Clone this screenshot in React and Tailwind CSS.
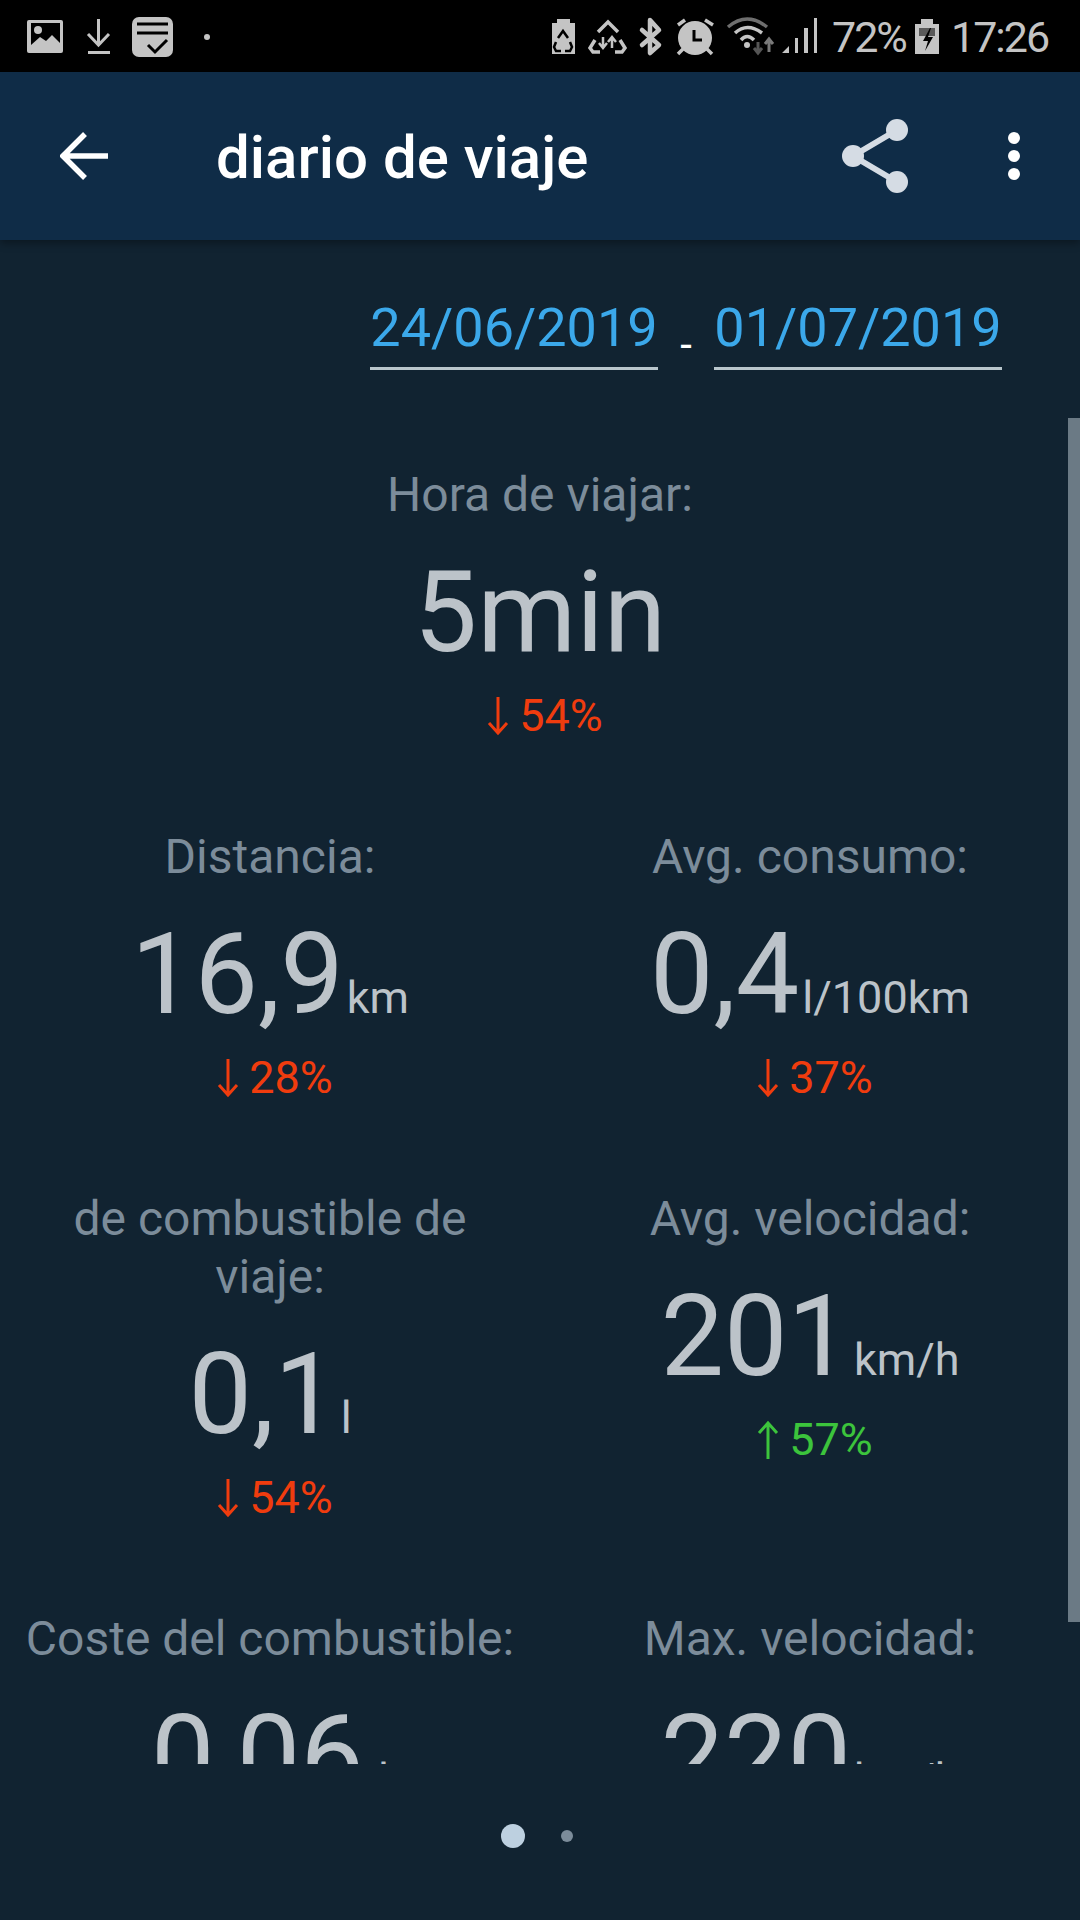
import React from "react";

function Arrow({ up, color }) {
  return (
    <svg width="22" height="40" viewBox="0 0 22 40" fill="none" stroke={color} strokeWidth="3">
      {up ? (
        <path d="M11 39V3M2 13l9-10 9 10" />
      ) : (
        <path d="M11 1v36M2 27l9 10 9-10" />
      )}
    </svg>
  );
}

function Delta({ value, up }) {
  const color = up ? "#3cc43c" : "#f03c0e";
  return (
    <div className={`flex items-center justify-center gap-[10px] h-[56px] mt-[9px] ml-[10px] text-[45px] ${up ? "text-[#3cc43c]" : "text-[#f03c0e]"}`}>
      <Arrow up={up} color={color} />
      <span>{value}</span>
    </div>
  );
}

function Stat({ label, value, unit, delta, up }) {
  return (
    <div className="flex flex-col items-center text-center">
      <div className="text-[48px] leading-[58px] text-[#7c8c9a] whitespace-pre-line">{label}</div>
      <div className="flex items-baseline justify-center h-[132px] mt-[23px] text-[#bcc3c9]">
        <span className="text-[113px] leading-[132px]">{value}</span>
        {unit && <span className="text-[45px] ml-[3px]">{unit}</span>}
      </div>
      <Delta value={delta} up={up} />
    </div>
  );
}

function StatusBar() {
  return (
    <div className="h-[72px] bg-black flex items-center text-[#c4c4c4] shrink-0">
      <svg width="1080" height="72" viewBox="0 0 1080 72" className="absolute left-0 top-0" fill="#c4c4c4">
        {/* gallery */}
        <path d="M27 22a2 2 0 0 1 2-2h32a2 2 0 0 1 2 2v29a2 2 0 0 1-2 2H29a2 2 0 0 1-2-2z" />
        <path d="M31 45l9-8 6 4 6-6 8 8v-20H31z" fill="#000" />
        <circle cx="38" cy="30" r="4" fill="#c4c4c4" />
        {/* download */}
        <path d="M98.500 19v26M88 34l10.500 11L109 34" fill="none" stroke="#c4c4c4" strokeWidth="3" />
        <rect x="88" y="51" width="22" height="3" />
        {/* check note */}
        <rect x="132" y="17" width="41" height="40" rx="7" />
        <path d="M137 24h31M137 33h31" stroke="#000" strokeWidth="3" />
        <path d="M148 45l7 7 12-12" fill="none" stroke="#000" strokeWidth="3" />
        <circle cx="207" cy="37" r="3" />
        {/* battery recycle */}
        <path d="M552 23h5v-4h13v4h5v31h-23z" />
        <path d="M558 38l5-7 5 7M556 42l-2 5 2 4h5M570 42l2 5-2 4h-5" fill="none" stroke="#000" strokeWidth="2.500" />
        {/* recycle triangle */}
        <path d="M598 32l10-10 10 10M595 40l-5 8 3 4h7M620 40l5 8-3 4h-7" fill="none" stroke="#c4c4c4" strokeWidth="3.500" />
        <path d="M603 37v10M599 43l4 5 4-5M612 48V37M608 42l4-5 4 5" fill="none" stroke="#c4c4c4" strokeWidth="2.500" />
        {/* bluetooth */}
        <path d="M642 30l17 15-9 8V20l9 10-17 15" fill="none" stroke="#c4c4c4" strokeWidth="4.500" strokeLinecap="round" strokeLinejoin="round" />
        {/* alarm */}
        <circle cx="695" cy="38" r="17" />
        <path d="M694 30v10h8" fill="none" stroke="#000" strokeWidth="3" />
        <path d="M678 25l7-5M713 25l-8-5M678 54l5-5M712 54l-5-5" fill="none" stroke="#c4c4c4" strokeWidth="3.500" />
        {/* wifi */}
        <path d="M728 27q19-16 39 0" fill="none" stroke="#6e6e6e" strokeWidth="3.500" />
        <path d="M735 33q12-11 27 0M741 40q6-7 13 0" fill="none" stroke="#c4c4c4" strokeWidth="3.500" />
        <circle cx="747" cy="45" r="3" />
        <path d="M758 42v11M754 48l4 5 4-5" fill="none" stroke="#555" strokeWidth="3" />
        <path d="M769 52V39M765 44l4-5 4 5" fill="none" stroke="#7a7a7a" strokeWidth="3" />
        {/* signal */}
        <path d="M782 53l7-7v7zM795 38h3v15h-3zM804 28h4v25h-4zM814 18h3v35h-3z" />
        {/* charging battery */}
        <path d="M915 24h6v-5h12v5h6v30h-24z" />
        <path d="M919 28h16v8h-16z" fill="#5a5a5a" />
        <path d="M930 28l-7 13h5l-3 10 8-14h-5l3-9z" fill="#000" />
      </svg>
      <span className="absolute left-[832px] top-[15px] text-[43px] leading-[44px] tracking-[-2px]">72%</span>
      <span className="absolute left-[951px] top-[15px] text-[43px] leading-[44px] tracking-[-2px]">17:26</span>
    </div>
  );
}

export default function App() {
  return (
    <div className="relative w-[1080px] h-[1920px] flex flex-col bg-[#112331] overflow-hidden font-['Roboto',sans-serif]">
      <StatusBar />

      {/* Toolbar */}
      <div className="relative h-[168px] shrink-0 bg-[#0f2c47] flex items-center shadow-[0_3px_8px_rgba(0,0,0,0.35)]">
        <svg width="48" height="48" viewBox="0 0 48 48" fill="none" stroke="#fff" strokeWidth="5.500" className="ml-[60px]">
          <path d="M48 24H4M25 2L3 24l22 22" />
        </svg>
        <span className="ml-[108px] mt-[3px] text-[60px] font-medium text-white">diario de viaje</span>
        <svg width="70" height="76" viewBox="0 0 70 76" className="ml-auto mr-[100px]" fill="#d5dce4">
          <path d="M15 38L59 12M15 38l44 26" stroke="#d5dce4" strokeWidth="6" />
          <circle cx="59" cy="12" r="11" />
          <circle cx="15" cy="38" r="11" />
          <circle cx="59" cy="64" r="11" />
        </svg>
        <div className="flex flex-col gap-[6px] mr-[60px]">
          <div className="w-[12px] h-[12px] rounded-full bg-white" />
          <div className="w-[12px] h-[12px] rounded-full bg-white" />
          <div className="w-[12px] h-[12px] rounded-full bg-white" />
        </div>
      </div>

      {/* Date range */}
      <div className="flex justify-end items-start pr-[78px] pt-[51px] h-[178px] shrink-0">
        <div className="w-[288px] h-[79px] border-b-[3px] border-[#b9c6cc] text-[54px] leading-[74px] text-[#3ba8ea] text-center">24/06/2019</div>
        <div className="w-[56px] pt-[17px] text-center text-[42px] leading-[74px] text-white">-</div>
        <div className="w-[288px] h-[79px] border-b-[3px] border-[#b9c6cc] text-[54px] leading-[74px] text-[#3ba8ea] text-center">01/07/2019</div>
      </div>

      {/* Scroll area */}
      <div className="relative h-[1346px] shrink-0 overflow-hidden">
        <div className="absolute right-0 top-0 w-[12px] h-[1204px] bg-[#6b7a85]" />
        <div className="flex flex-col items-center pt-[48px] pb-[84px]">
          <Stat label="Hora de viajar:" value="5min" delta="54%" />
        </div>
        <div className="grid grid-cols-2 gap-y-[84px]">
          <Stat label="Distancia:" value="16,9" unit="km" delta="28%" />
          <Stat label="Avg. consumo:" value="0,4" unit="l/100km" delta="37%" />
          <Stat label={"de combustible de\nviaje:"} value="0,1" unit="l" delta="54%" />
          <Stat label="Avg. velocidad:" value="201" unit="km/h" delta="57%" up />
          <Stat label="Coste del combustible:" value="0,06" unit={"\u00a0l"} delta="54%" />
          <Stat label="Max. velocidad:" value="220" unit="km/h" delta="12%" up />
        </div>
      </div>

      {/* Pager */}
      <div className="relative flex-1 bg-[#112331] flex items-start justify-center gap-[36px] pt-[60px] pr-[6px]">
        <div className="w-[24px] h-[24px] rounded-full bg-[#bdd0e0]" />
        <div className="w-[12px] h-[12px] mt-[6px] rounded-full bg-[#7c8c9a]" />
      </div>
    </div>
  );
}
